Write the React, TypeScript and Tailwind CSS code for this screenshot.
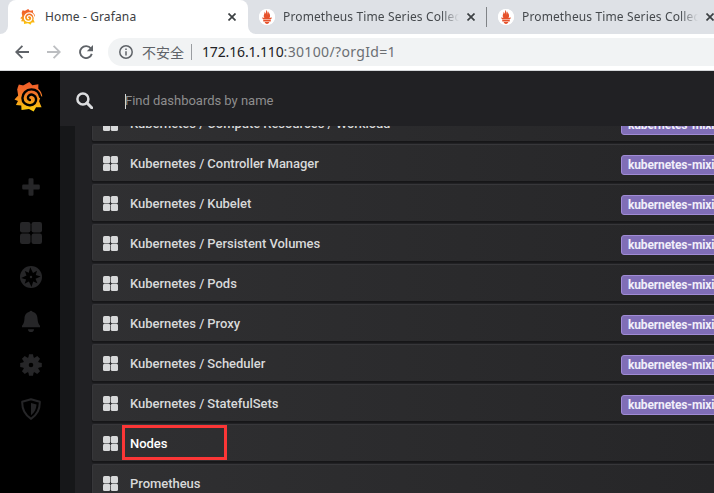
import React from "react";
import { SiPrometheus } from "react-icons/si";

const rows: { name: string; tag?: boolean; active?: boolean }[] = [
  { name: "Kubernetes / Compute Resources / Workload", tag: true },
  { name: "Kubernetes / Controller Manager", tag: true },
  { name: "Kubernetes / Kubelet", tag: true },
  { name: "Kubernetes / Persistent Volumes", tag: true },
  { name: "Kubernetes / Pods", tag: true },
  { name: "Kubernetes / Proxy", tag: true },
  { name: "Kubernetes / Scheduler", tag: true },
  { name: "Kubernetes / StatefulSets", tag: true },
  { name: "Nodes", active: true },
  { name: "Prometheus" },
];

function GrafanaLogo({ size, id, gap }: { size: number; id: string; gap: string }) {
  return (
    <svg width={size} height={size} viewBox="0 0 30 31" className="block shrink-0">
      <defs>
        <linearGradient id={id} x1="0" y1="0" x2="0" y2="1">
          <stop offset="0" stopColor="#f05a28" />
          <stop offset="0.35" stopColor="#f2702a" />
          <stop offset="1" stopColor="#fdd20a" />
        </linearGradient>
      </defs>
      <path
        fill={`url(#${id})`}
        d="M15.300 0L18.500 3.400 24.700 2.300 24.600 7Q28.600 10.500 28.600 15.500L26.800 14Q27 17 25.400 20L28 26 22.300 26.200 19.800 30.500 15 27.800 7.300 29 7 24.300 1.500 23.700 3.600 19.600 0 18 3.800 14 2.700 7 8.600 6.600 9.400 3.300z M3 6.800L4.500 2.500 10.500 3.800 8 8z"
      />
      <path
        fill="none"
        stroke={gap}
        strokeWidth="2.500"
        strokeLinecap="round"
        d="M26.600 15.500C25.500 10 21.500 7.600 17.500 7.600 12 7.600 8.200 12 8.200 16.500 8.200 21.300 12 24.300 16.200 24 20.300 23.700 22.800 20.700 22.300 17.300 21.700 13.700 17.800 12 15.300 13.600 13.200 15 13.400 18.200 15.900 18.600"
      />
    </svg>
  );
}

function DashIcon({ size }: { size: number }) {
  return (
    <svg width={size} height={size} viewBox="0 0 22 22" fill="currentColor" className="block shrink-0">
      <rect x="0" y="0" width="10.5" height="10.5" rx="2.2" />
      <rect x="11.5" y="0" width="10.5" height="10.5" rx="2.2" />
      <rect x="0" y="11.5" width="10.5" height="10.5" rx="2.2" />
      <rect x="11.5" y="11.5" width="10.5" height="10.5" rx="2.2" />
    </svg>
  );
}

function Close() {
  return (
    <svg width="8" height="8" viewBox="0 0 8 8" className="block shrink-0" stroke="#3c4043" strokeWidth="1.7">
      <path d="M0.5 0.5l7 7M7.5 0.5l-7 7" />
    </svg>
  );
}

function PrometheusTab() {
  return (
    <>
      <span className="flex h-4 w-4 shrink-0 items-center justify-center rounded-full bg-[radial-gradient(circle,#e6522c_60%,#fff_62%)]">
        <SiPrometheus size={16} color="#fff" />
      </span>
      <span className="ml-2 w-[176px] shrink-0 overflow-hidden whitespace-nowrap text-[12px] leading-[16px] tracking-[0.13px] text-[#45494d] [mask-image:linear-gradient(to_right,#000_158px,transparent_176px)]">
        Prometheus Time Series Collec
      </span>
    </>
  );
}

function Browser() {
  return (
    <header className="h-[71px] border-b border-[#d5d7da] bg-white font-['Noto_Sans','Noto_Sans_CJK_SC',sans-serif]">
      <div className="flex h-[34px] bg-[#dee1e6]">
        <div className="h-full w-2 bg-white">
          <div className="h-full rounded-br-lg bg-[#dee1e6]" />
        </div>
        <div className="flex w-[240px] shrink-0 items-center rounded-t-lg bg-white pl-3">
          <GrafanaLogo size={16} id="tabLogo" gap="#fff" />
          <span className="ml-[9px] w-[183px] whitespace-nowrap text-[12px] leading-[16px] tracking-[0.13px] text-[#3c4043]">
            Home - Grafana
          </span>
          <Close />
        </div>
        <div className="h-full w-[466px] bg-white">
          <div className="flex h-full items-center overflow-hidden rounded-bl-lg bg-[#dee1e6] pl-[11px]">
            <PrometheusTab />
            <span className="ml-2"><Close /></span>
            <span className="ml-[11px] mr-[11px] h-5 w-px shrink-0 bg-[#808387]" />
            <PrometheusTab />
            <span className="ml-[8px]"><Close /></span>
          </div>
        </div>
      </div>
      <div className="flex h-9 items-center pl-[15px]">
        <svg width="14" height="14" viewBox="0 0 14 14" fill="none" stroke="#5f6368" strokeWidth="1.8">
          <path d="M14 7H1.4M7.4 0.8L1.2 7l6.2 6.2" />
        </svg>
        <svg width="14" height="14" viewBox="0 0 14 14" fill="none" stroke="#bcbec1" strokeWidth="1.8" className="ml-[18px]">
          <path d="M0 7h12.6M6.6 0.8L12.8 7l-6.2 6.2" />
        </svg>
        <svg width="14" height="14" viewBox="0 0 14 14" fill="none" className="ml-[18px]">
          <path d="M11.9 3.5A6 6 0 1 0 12.8 8.9" stroke="#5f6368" strokeWidth="1.9" />
          <path d="M14 0v6.2H7.8z" fill="#5f6368" />
        </svg>
        <div className="ml-[15px] flex h-7 w-[606px] items-center rounded-l-full bg-[#f1f3f4] pl-[11px]">
          <svg width="14" height="14" viewBox="0 0 14 14" fill="none" stroke="#5f6368" strokeWidth="1.5" className="shrink-0">
            <circle cx="7" cy="7" r="6.2" />
            <path d="M7 6.2v4.3M7 3.4v1.5" />
          </svg>
          <span className="ml-[9px] whitespace-nowrap font-['Noto_Sans_CJK_SC',sans-serif] text-[14px] leading-5 text-[#5f6368]">不安全</span>
          <span className="ml-[7px] h-4 w-px bg-[#9a9da1]" />
          <span className="ml-[10px] whitespace-nowrap text-[14px] leading-5 tracking-[0.35px] text-[#6b6f73]">
            <span className="tracking-[-0.15px] text-[#202124]">172.16.1.110</span>:30100/?orgId=1
          </span>
        </div>
      </div>
    </header>
  );
}

function Sidebar() {
  return (
    <nav className="flex w-[60px] shrink-0 flex-col bg-black pl-[14px] pt-[11px] text-[#262628]">
      <GrafanaLogo size={30} id="navLogo" gap="#000" />
      <div className="mt-[52px] flex w-[34px] flex-col items-center">
        <div className="flex h-[46px] items-center">
          <svg width="18" height="18" viewBox="0 0 18 18" fill="currentColor">
            <path d="M6.5 1.4Q6.5.2 7.7.2h2.6q1.2 0 1.2 1.2v5.1h5.1q1.2 0 1.2 1.2v2.6q0 1.2-1.2 1.2h-5.1v5.1q0 1.2-1.2 1.2H7.7q-1.2 0-1.2-1.2v-5.1H1.4q-1.2 0-1.2-1.2V7.700q0-1.200 1.200-1.200h5.100z" />
          </svg>
        </div>
        <div className="flex h-[45px] items-center"><DashIcon size={22} /></div>
        <div className="flex h-11 items-center">
          <svg width="22" height="22" viewBox="0 0 22 22">
            <circle cx="11" cy="11" r="11" fill="currentColor" />
            <path d="M10.200 1.200L13 7l4-2.200-1.200 4.200 4.900 1.600-5.200 2.200 1.900 4.400-4.200-1.700-1.700 5.600-2.600-5.500-4.300 2.200 1.500-4.400-4.900-1.400 5.300-2.600-1.700-4.500 4 1.800z" fill="#000" />
            <circle cx="11" cy="11" r="1.200" fill="currentColor" />
          </svg>
        </div>
        <div className="flex h-11 items-center">
          <svg width="18" height="22" viewBox="0 0 18 22" fill="currentColor">
            <path d="M7.500 1.700a1.600 1.600 0 0 1 3 0C14.100 2.500 15.300 5.300 15.500 8.500c.2 4 1.100 5.800 2.500 7.200v1.600H0v-1.600c1.400-1.400 2.300-3.200 2.500-7.200.2-3.200 1.400-6 5-6.800zM6 19.200h6a3 2.800 0 0 1-6 0z" />
          </svg>
        </div>
        <div className="flex h-11 items-center">
          <svg width="22" height="22" viewBox="0 0 22 22">
            <g fill="currentColor">
              <circle cx="11" cy="11" r="8" />
              {[0, 45, 90, 135, 180, 225, 270, 315].map((a) => (
                <path key={a} transform={`rotate(${a} 11 11)`} d="M9 0.200h4l.9 4.800H8.100z" />
              ))}
            </g>
            <circle cx="11" cy="11" r="2.300" fill="#000" />
          </svg>
        </div>
        <div className="flex h-11 items-center">
          <svg width="20" height="22" viewBox="0 0 20 22">
            <path d="M10 1.200L18.800 3.800C19 11 16 17 10 20.800 4 17 1 11 1.200 3.800z" fill="none" stroke="currentColor" strokeWidth="2" strokeLinejoin="round" />
            <path d="M10 5l5.500 1.500C15.300 11 13.500 14.500 10 17.200z" fill="currentColor" />
          </svg>
        </div>
      </div>
    </nav>
  );
}

function Search() {
  return (
    <main className="flex min-w-0 flex-1 flex-col bg-[#161719]">
      <div className="flex h-[55px] shrink-0 items-center bg-[#212124] pl-4">
        <svg width="17" height="17" viewBox="0 0 17 17" fill="none" stroke="#dcdddf" className="mt-[3px]">
          <circle cx="6.900" cy="6.900" r="5.500" strokeWidth="2.500" />
          <path d="M11 11l4.700 4.700" strokeWidth="3" strokeLinecap="round" />
        </svg>
        <div className="ml-8 mt-[5px] flex items-center text-[13px] text-[#8e8e8e]">
          <span className="-mr-px h-[15px] w-px bg-[#d8d9da]" />
          <span className="tracking-[-0.02px]">Find dashboards by name</span>
        </div>
      </div>
      <div className="ml-[15px] min-h-0 flex-1 overflow-hidden bg-[#212124] pl-[17px]">
        <div className="-mt-[22px] flex flex-col gap-[3px]">
          {rows.map((r) => (
            <div
              key={r.name}
              className="flex h-[37px] shrink-0 items-center rounded-l-[2px] border-l border-t border-[#37373a] bg-linear-to-r from-[#303032] to-[#262628] pl-[10px] shadow-[-1px_1px_0_0_rgba(0,0,0,0.1),0_2px_0_0_#19191b]"
            >
              <span className="text-[#d8d9da]"><DashIcon size={15} /></span>
              <span className="relative ml-[12px] w-[491px] shrink-0 whitespace-nowrap text-[13px] font-medium leading-[19px] tracking-[-0.04px]">
                <span className={r.active ? "text-white" : "text-[#d8d9da]"}>{r.name}</span>
                {r.active && <span className="absolute -left-[8px] -top-[9px] h-[35px] w-[105px] border-[3px] border-[#fb3636]" />}
              </span>
              {r.tag && (
                <span className="mt-[3px] h-5 shrink-0 whitespace-nowrap rounded-[3px] border border-[#a18bd6] bg-[#806eb7] px-[6px] text-[12px] font-bold leading-[18px] tracking-[-0.13px] text-[#f1effa]">
                  kubernetes-mixin
                </span>
              )}
            </div>
          ))}
        </div>
      </div>
    </main>
  );
}

export default function App() {
  return (
    <div className="flex h-[493px] w-[714px] flex-col overflow-hidden font-[Roboto,sans-serif]">
      <Browser />
      <div className="flex min-h-0 flex-1">
        <Sidebar />
        <Search />
      </div>
    </div>
  );
}
